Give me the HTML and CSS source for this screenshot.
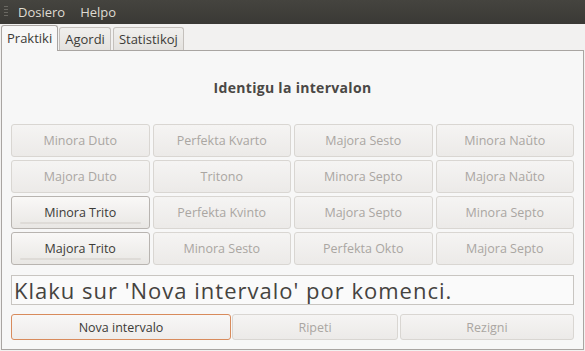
FILE: index.html
```html
<!DOCTYPE html>
<html>
<head>
<meta charset="utf-8">
<link rel="stylesheet" href="styles.css">
</head>
<body>
<div class="menubar">
  <span class="grip"></span>
  <span class="menu-item">Dosiero</span>
  <span class="menu-item">Helpo</span>
</div>
<div class="tabs">
  <div class="tab active">Praktiki</div>
  <div class="tab">Agordi</div>
  <div class="tab">Statistikoj</div>
</div>
<div class="pane">
  <div class="title">Identigu la intervalon</div>
  <div class="grid">
    <div class="btn dis">Minora Duto</div>
    <div class="btn dis">Perfekta Kvarto</div>
    <div class="btn dis">Majora Sesto</div>
    <div class="btn dis">Minora Naŭto</div>
    <div class="btn dis">Majora Duto</div>
    <div class="btn dis">Tritono</div>
    <div class="btn dis">Minora Septo</div>
    <div class="btn dis">Majora Naŭto</div>
    <div class="btn en">Minora Trito</div>
    <div class="btn dis">Perfekta Kvinto</div>
    <div class="btn dis">Majora Septo</div>
    <div class="btn dis">Minora Septo</div>
    <div class="btn en">Majora Trito</div>
    <div class="btn dis">Minora Sesto</div>
    <div class="btn dis">Perfekta Okto</div>
    <div class="btn dis">Majora Septo</div>
  </div>
  <div class="message">Klaku sur 'Nova intervalo' por komenci.</div>
  <div class="actions">
    <div class="btn default nova">Nova intervalo</div>
    <div class="btn dis ripeti">Ripeti</div>
    <div class="btn dis rezigni">Rezigni</div>
  </div>
</div>
</body>
</html>
```

FILE: styles.css
```css
html, body {
  margin: 0;
  padding: 0;
  width: 585px;
  height: 351px;
  overflow: hidden;
  background: #f2f1f0;
  font-family: "Open Sans", "Noto Sans", "DejaVu Sans", sans-serif;
  color: #3c3b37;
}
.menubar {
  height: 24px;
  background: linear-gradient(#45443f, #3a3935);
  display: flex;
  align-items: center;
  font-size: 13px;
  color: #dfdbd2;
}
.grip {
  width: 4px;
  height: 12px;
  margin: 0 8px 0 4px;
  background: repeating-linear-gradient(#6a6862 0 1px, transparent 1px 3px);
}
.menu-item {
  margin-right: 13px;
  margin-left: 2px;
}
.tabs {
  height: 26px;
  display: flex;
  align-items: flex-end;
  padding-left: 1px;
  position: relative;
  z-index: 2;
}
.tab {
  height: 22px;
  line-height: 22px;
  padding: 0 5px;
  margin-right: 2px;
  font-size: 13px;
  border: 1px solid #c4c0bc;
  border-bottom: none;
  border-radius: 3px 3px 0 0;
  background: linear-gradient(#f0efed, #e4e2df);
  color: #3c3b37;
}
.tab.active {
  height: 25px;
  line-height: 24px;
  margin-right: 1px;
  border-color: #a9a5a2;
  background: #f7f7f7;
  margin-bottom: -1px;
}
.pane {
  margin-left: 1px;
  width: 563px;
  height: 270px;
  border: 1px solid #a9a5a2;
  background: #f7f7f7;
  padding: 28px 9px 0 9px;
  position: relative;
  z-index: 1;
}
.title {
  height: 18px;
  line-height: 18px;
  text-align: center;
  font-weight: bold;
  font-size: 14px;
  letter-spacing: 0.3px;
  color: #4a4845;
  margin-bottom: 27px;
}
.grid {
  display: grid;
  grid-template-columns: repeat(4, 1fr);
  grid-auto-rows: 33px;
  gap: 3px;
}
.btn {
  box-sizing: border-box;
  border: 1px solid #d2cfcb;
  border-radius: 3px;
  display: flex;
  align-items: center;
  justify-content: center;
  font-size: 12.5px;
  position: relative;
}
.btn.dis {
  color: #aaa6a2;
  background: linear-gradient(#f5f4f3, #eceae8);
  border-color: #d9d6d2;
}
.btn.en {
  color: #3c3b37;
  background: linear-gradient(#f9f8f7, #e9e7e4);
  border-color: #b8b4b0;
}
.btn.en::after {
  content: "";
  position: absolute;
  left: 8px;
  right: 8px;
  bottom: 4px;
  height: 2px;
  border-radius: 1px;
  background: #dedbd7;
}
.message {
  box-sizing: border-box;
  margin-top: 10px;
  height: 30px;
  border: 1px solid #c8c5c1;
  background: #fafafa;
  font-size: 22px;
  letter-spacing: 1px;
  line-height: 28px;
  padding-left: 2px;
  color: #45433f;
  white-space: nowrap;
  overflow: hidden;
}
.actions {
  margin-top: 9px;
  display: flex;
  height: 26px;
}
.nova {
  width: 220px;
  margin-right: 1px;
  border-color: #d88b5c;
  background: linear-gradient(#f8f7f6, #eeecea);
  color: #3c3b37;
}
.ripeti {
  width: 166px;
  margin-right: 2px;
}
.rezigni {
  flex: 1;
}
```
